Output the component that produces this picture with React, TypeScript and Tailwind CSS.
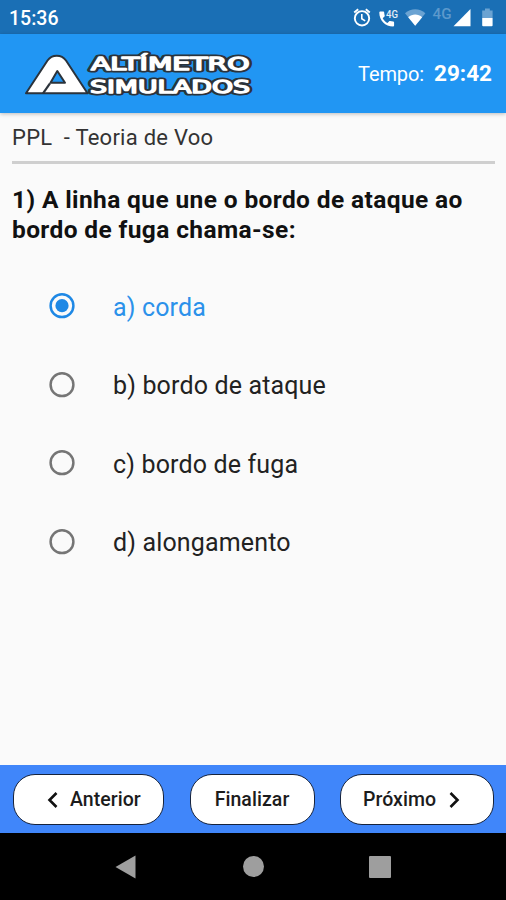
import React, { useState } from 'react';

type Option = {
  id: string;
  label: string;
};

const options: Option[] = [
  { id: 'a', label: 'a) corda' },
  { id: 'b', label: 'b) bordo de ataque' },
  { id: 'c', label: 'c) bordo de fuga' },
  { id: 'd', label: 'd) alongamento' },
];

function StatusIcons() {
  return (
    <svg className="w-[146px] h-[34px]" viewBox="352 0 146 34" fill="none">
      {/* Alarm */}
      <circle cx="362" cy="18.3" r="7.2" stroke="#fff" strokeWidth="1.9" />
      <path d="M354.2 12.4l4-3.2M369.8 12.4l-4-3.2" stroke="#fff" strokeWidth="1.9" />
      <path d="M361.8 14v4.7l3.4 2.2" stroke="#fff" strokeWidth="1.6" />
      {/* Call over 4G */}
      <path
        d="M380.2 11.6h3.1c.5 0 .9.4.9.9 0 1.1.2 2.1.5 3.1.1.3 0 .7-.2.9l-1.8 1.7c1.2 2.2 2.7 3.7 4.8 4.8l1.7-1.8c.2-.2.6-.3.9-.2 1 .3 2 .5 3.1.5.5 0 .9.4.9.9v3.2c0 .5-.4.9-.9.9-8 0-13.9-6-13.9-14 0-.5.4-.9.9-.9z"
        fill="#fff"
      />
      <text x="386" y="17.8" fill="#e3eef8" fontSize="11" fontWeight="500" textLength="12" lengthAdjust="spacingAndGlyphs" className="font-['Roboto',sans-serif]">4G</text>
      {/* Wifi */}
      <path d="M405 13.3c5.8-5.3 14.6-5.3 20.4 0L415.2 25.8z" fill="#6ba3d2" />
      <path d="M408.2 17.2c4-3.5 10-3.5 14 0l-7 8.6z" fill="#fff" />
      {/* Mobile signal */}
      <text x="432.5" y="19.3" fill="#5c99cc" fontSize="14" fontWeight="500" textLength="19" lengthAdjust="spacingAndGlyphs" className="font-['Roboto',sans-serif]">4G</text>
      <path d="M470.5 9v17.3h-17z" fill="#fff" />
      {/* Battery */}
      <path d="M482.2 10.5h2.8V8.5h4.8v2h2.8V18h-10.4z" fill="#6ba3d2" />
      <path d="M482.2 18h10.4v7.3a1 1 0 01-1 1h-8.4a1 1 0 01-1-1z" fill="#fff" />
    </svg>
  );
}

function LogoText({ stroke, strokeWidth }: { stroke: string; strokeWidth: number }) {
  return (
    <g
      className="font-['DejaVu_Sans',sans-serif]"
      fill="#fff"
      stroke={stroke}
      strokeWidth={strokeWidth}
      strokeLinejoin="round"
      fontSize="17.2"
    >
      <text x="91" y="71.3" textLength="158.5" lengthAdjust="spacingAndGlyphs">ALTÍMETRO</text>
      <text x="90" y="93.8" textLength="160" lengthAdjust="spacingAndGlyphs">SIMULADOS</text>
    </g>
  );
}

function Logo() {
  return (
    <svg className="w-[232px] h-[50px]" viewBox="24 50 232 50">
      <path
        d="M26 94.3L47.5 61.5C52 55 61.5 55 66 61.5L87.5 94.3H26z"
        fill="#fff"
        stroke="#2b333b"
        strokeWidth="2"
        strokeLinejoin="round"
      />
      <path d="M50 84.3L43 94.3" stroke="#2b333b" strokeWidth="2.2" />
      <path d="M50.5 83.8h14.5L57.3 72z" fill="#2196f3" stroke="#2b333b" strokeWidth="2" strokeLinejoin="round" />
      {/* Dark outline below, thickened white letters on top */}
      <LogoText stroke="#2b333b" strokeWidth={5} />
      <LogoText stroke="#fff" strokeWidth={1.4} />
    </svg>
  );
}

function Radio({ checked }: { checked: boolean }) {
  const color = checked ? '#1e88e5' : '#757575';
  return (
    <svg className="w-[26px] h-[26px]" viewBox="0 0 26 26" fill="none">
      <circle cx="13" cy="12.7" r="11.4" stroke={color} strokeWidth="2.5" />
      {checked && <circle cx="13" cy="12.7" r="6.6" fill={color} />}
    </svg>
  );
}

export default function App() {
  const [selected, setSelected] = useState('a');

  return (
    <div className="w-[506px] h-[900px] flex flex-col overflow-hidden bg-[#fafafa] font-['Roboto',sans-serif] text-[#1c1c1c]">
      <div className="h-[34px] shrink-0 bg-[#1a6fb5] flex items-center justify-between pl-[9px] pr-2 text-white">
        <span className="text-[19.5px] font-medium leading-none pt-[4px]">15:36</span>
        <StatusIcons />
      </div>

      <header className="h-[79px] shrink-0 bg-[#2196f3] flex items-center justify-between pl-6 pr-[14px] text-white shadow-[0_1px_4px_rgba(0,0,0,0.25)] z-10">
        <Logo />
        <div className="flex items-center">
          <span className="text-[20px] tracking-[-0.1px] mr-[10px]">Tempo:</span>
          <span className="text-[22.5px] font-bold">29:42</span>
        </div>
      </header>

      <main className="flex-1 px-3">
        <p className="h-[48px] pt-[10px] text-[22px] leading-[30px] tracking-[0.25px] whitespace-pre text-[#333]">PPL  - Teoria de Voo</p>
        <div className="h-[3px] bg-[#cfcfcf] mr-[-1px]" />
        <h1 className="mt-[21px] text-[24.5px] leading-[30px] tracking-[0.38px] font-bold text-[#111]">
          1) A linha que une o bordo de ataque ao
          <br />
          bordo de fuga chama-se:
        </h1>

        <div className="mt-[22px] pl-[37px] flex flex-col">
          {options.map((option) => (
            <button
              key={option.id}
              onClick={() => setSelected(option.id)}
              className="h-[78.6px] flex items-center text-left"
            >
              <Radio checked={selected === option.id} />
              <span
                className={
                  selected === option.id
                    ? 'ml-[38px] pt-[2px] text-[25px] tracking-[0.15px] text-[#2b91ea]'
                    : 'ml-[38px] pt-[2px] text-[25px] tracking-[0.15px] text-[#222]'
                }
              >
                {option.label}
              </span>
            </button>
          ))}
        </div>
      </main>

      <footer className="h-[68px] shrink-0 bg-[#4086fa] flex items-start justify-between pl-[13px] pr-3 pt-[9px] text-[19.5px] font-medium tracking-[0.05px] text-[#1c1c1c]">
        <button className="w-[151px] h-[51px] rounded-[22px] border border-[#16233c] bg-white flex items-center pl-[33px]">
          <svg className="w-[12px] h-[18px] mr-[11px]" viewBox="0 0 12 18" fill="none" stroke="#111" strokeWidth="2.6">
            <path d="M9.5 2l-7 7 7 7" />
          </svg>
          <span className="pt-px">Anterior</span>
        </button>
        <button className="w-[125px] h-[51px] rounded-[22px] border border-[#16233c] bg-white pt-px">Finalizar</button>
        <button className="w-[154px] h-[51px] rounded-[22px] border border-[#16233c] bg-white flex items-center pl-[22px]">
          <span className="pt-px">Próximo</span>
          <svg className="w-[12px] h-[18px] ml-[12px]" viewBox="0 0 12 18" fill="none" stroke="#111" strokeWidth="2.6">
            <path d="M2.5 2l7 7-7 7" />
          </svg>
        </button>
      </footer>

      <nav className="h-[67px] shrink-0 bg-black flex items-center pl-[115px]">
        <svg className="w-[21px] h-[24px]" viewBox="0 0 21 24">
          <path d="M20.5.5v23L.5 12z" fill="#9e9e9e" />
        </svg>
        <span className="w-[21px] h-[21px] ml-[107px] rounded-full bg-[#9e9e9e]" />
        <span className="w-[22px] h-[22px] ml-[105px] rounded-[1px] bg-[#9e9e9e]" />
      </nav>
    </div>
  );
}
